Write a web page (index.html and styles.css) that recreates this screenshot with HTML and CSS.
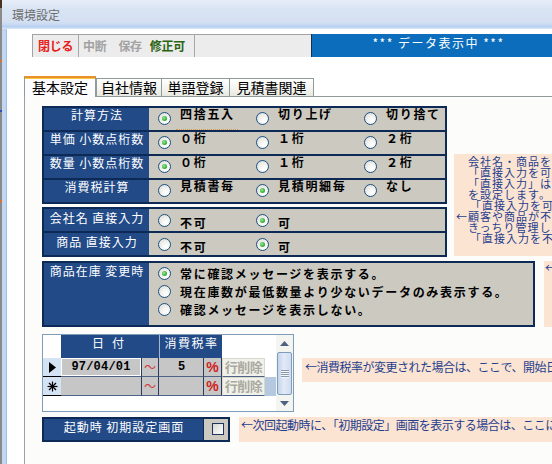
FILE: index.html
```html
<!DOCTYPE html>
<html lang="ja">
<head>
<meta charset="utf-8">
<title>環境設定</title>
<link rel="stylesheet" href="styles.css">
</head>
<body>
<div class="screen">
  <div class="desk-strip"></div>
  <div class="window">
    <header class="titlebar"><span class="title">環境設定</span></header>
    <div class="client">
      <div class="win-edge"></div>
      <main class="content">
        <div class="toolbar">
          <div class="tb-group tb-first"><span class="tb-btn red">閉じる</span></div>
          <div class="tb-group tb-second">
            <span class="tb-btn gray">中断</span>
            <span class="tb-btn gray sp12">保存</span>
            <span class="tb-btn green sp8">修正可</span>
          </div>
          <div class="tb-group tb-third"></div>
          <div class="banner">*** データ表示中 ***</div>
        </div>

        <nav class="tabs">
          <div class="tab active">基本設定</div>
          <div class="tab t2">自社情報</div>
          <div class="tab t3">単語登録</div>
          <div class="tab t4">見積書関連</div>
          <div class="tab-rest"></div>
        </nav>

        <section class="panel">
          <div class="sec-a">
            <div class="col-a">
              <div class="grp g1">
                <div class="grp-row">
                  <div class="lbl">計算方法</div>
                  <div class="opts">
                    <div class="opt o1"><span class="radio on"><span class="dot"></span></span><span class="opt-text">四捨五入</span><span class="focus-line"></span></div>
                    <div class="opt o2"><span class="radio"></span><span class="opt-text">切り上げ</span></div>
                    <div class="opt o3"><span class="radio"></span><span class="opt-text">切り捨て</span></div>
                  </div>
                </div>
                <div class="grp-row">
                  <div class="lbl">単価 小数点桁数</div>
                  <div class="opts">
                    <div class="opt o1"><span class="radio on"><span class="dot"></span></span><span class="opt-text">０桁</span></div>
                    <div class="opt o2"><span class="radio"></span><span class="opt-text">１桁</span></div>
                    <div class="opt o3"><span class="radio"></span><span class="opt-text">２桁</span></div>
                  </div>
                </div>
                <div class="grp-row">
                  <div class="lbl">数量 小数点桁数</div>
                  <div class="opts">
                    <div class="opt o1"><span class="radio on"><span class="dot"></span></span><span class="opt-text">０桁</span></div>
                    <div class="opt o2"><span class="radio"></span><span class="opt-text">１桁</span></div>
                    <div class="opt o3"><span class="radio"></span><span class="opt-text">２桁</span></div>
                  </div>
                </div>
                <div class="grp-row">
                  <div class="lbl">消費税計算</div>
                  <div class="opts">
                    <div class="opt o1"><span class="radio"></span><span class="opt-text">見積書毎</span></div>
                    <div class="opt o2"><span class="radio on"><span class="dot"></span></span><span class="opt-text">見積明細毎</span></div>
                    <div class="opt o3"><span class="radio"></span><span class="opt-text">なし</span></div>
                  </div>
                </div>
              </div>

              <div class="grp g2">
                <div class="grp-row">
                  <div class="lbl">会社名 直接入力</div>
                  <div class="opts">
                    <div class="opt o1"><span class="radio"></span><span class="opt-text">不可</span></div>
                    <div class="opt o2"><span class="radio on"><span class="dot"></span></span><span class="opt-text">可</span></div>
                  </div>
                </div>
                <div class="grp-row">
                  <div class="lbl">商品 直接入力</div>
                  <div class="opts">
                    <div class="opt o1"><span class="radio"></span><span class="opt-text">不可</span></div>
                    <div class="opt o2"><span class="radio on"><span class="dot"></span></span><span class="opt-text">可</span></div>
                  </div>
                </div>
              </div>
            </div>

            <div class="note note1">
              <div class="nl p14">会社名・商品を含めた</div>
              <div class="nl p14">「直接入力を可能」</div>
              <div class="nl p14">「直接入力」は不可</div>
              <div class="nl p14">を設定します。</div>
              <div class="nl p16">「直接入力を可能」</div>
              <div class="nl p2">←顧客や商品が不特定</div>
              <div class="nl p14">きっちり管理したい</div>
              <div class="nl p16">「直接入力を不可」</div>
            </div>
          </div>

          <div class="sec-b">
            <div class="grp g3">
              <div class="grp-row tall">
                <div class="lbl">商品在庫 変更時</div>
                <div class="opts stack">
                  <div class="line"><span class="radio on"><span class="dot"></span></span><span class="opt-text">常に確認メッセージを表示する。</span></div>
                  <div class="line"><span class="radio"></span><span class="opt-text">現在庫数が最低数量より少ないデータのみ表示する。</span></div>
                  <div class="line"><span class="radio"></span><span class="opt-text">確認メッセージを表示しない。</span></div>
                </div>
              </div>
            </div>
            <div class="note note2">←</div>
          </div>

          <div class="sec-c">
            <div class="dtable">
              <div class="dgrid">
                <div class="dh">
                  <div class="c-sel-h"></div>
                  <div class="h-date">日付</div>
                  <div class="h-gap"></div>
                  <div class="h-rate">消費税率</div>
                </div>
                <div class="dr">
                  <div class="c-sel"><svg width="7" height="11" viewBox="0 0 7 11"><polygon points="0,0 7,5.5 0,11" fill="#000"/></svg></div>
                  <div class="c-date focus">97/04/01</div>
                  <div class="c-tilde">〜</div>
                  <div class="c-gap"></div>
                  <div class="c-rate">5</div>
                  <div class="c-pct">%</div>
                  <div class="c-del">行削除</div>
                </div>
                <div class="dr">
                  <div class="c-sel"><svg width="11" height="11" viewBox="0 0 11 11"><g stroke="#000" stroke-width="1.2"><line x1="5.5" y1="0.5" x2="5.5" y2="10.5"/><line x1="0.5" y1="5.5" x2="10.5" y2="5.5"/><line x1="2" y1="2" x2="9" y2="9"/><line x1="9" y1="2" x2="2" y2="9"/></g></svg></div>
                  <div class="c-date"></div>
                  <div class="c-tilde">〜</div>
                  <div class="c-gap"></div>
                  <div class="c-rate"></div>
                  <div class="c-pct">%</div>
                  <div class="c-del">行削除</div>
                  <div class="c-blue"></div>
                </div>
              </div>
              <div class="vscroll">
                <div class="sb-btn"><svg width="9" height="5" viewBox="0 0 9 5"><polygon points="0,5 4.5,0 9,5" fill="#4d6185"/></svg></div>
                <div class="sb-thumb"><span class="grip"></span><span class="grip"></span><span class="grip"></span><span class="grip"></span></div>
                <div class="sb-track"></div>
                <div class="sb-btn"><svg width="9" height="5" viewBox="0 0 9 5"><polygon points="0,0 9,0 4.5,5" fill="#4d6185"/></svg></div>
              </div>
            </div>
            <div class="note note3">←消費税率が変更された場合は、ここで、開始日を</div>
          </div>

          <div class="sec-d">
            <div class="startup">
              <div class="lbl">起動時 初期設定画面</div>
              <div class="chk-cell"><span class="checkbox"></span></div>
            </div>
            <div class="note note4">←次回起動時に、「初期設定」画面を表示する場合は、ここにチェック</div>
          </div>
        </section>
      </main>
    </div>
  </div>
</div>
</body>
</html>
```

FILE: styles.css
```css
* { box-sizing: border-box; margin: 0; padding: 0; }
html, body { width: 552px; height: 464px; overflow: hidden; }
body {
  font-family: "Noto Sans CJK JP", "Noto Sans", sans-serif;
  font-size: 12px;
  background: #fff;
  color: #000;
}
.screen { display: flex; width: 552px; height: 464px; }
.desk-strip {
  width: 2px; flex-shrink: 0;
  background: linear-gradient(#4a3020 0 8px, #8a8a8a 8px 60px, #e07020 60px 62px, #8a8a8a 62px 110px, #3050c0 110px 112px, #8a8a8a 112px 200px, #e07020 200px 202px, #8a8a8a 202px);
}
.window { flex: 1; display: flex; flex-direction: column; min-width: 0; }
.titlebar {
  height: 29px; flex-shrink: 0;
  display: flex; align-items: center; padding-left: 10px;
  background: linear-gradient(#e6edf8 0, #d9e4f3 30%, #d4e0f2 75%, #c6d9f3 86%, #b6cff1 93%, #dfeafb 100%);
}
.title { color: #6d6d6d; font-size: 12px; line-height: 14px; }
.client { flex: 1; display: flex; min-height: 0; }
.win-edge { width: 5px; flex-shrink: 0; background: #c2d6f1; border-right: 1px solid #a2bfe6; }
.content { flex: 1; background: #fff; display: flex; flex-direction: column; overflow: hidden; min-width: 0; }

/* toolbar */
.toolbar { display: flex; margin: 5px 0 0 25px; height: 23px; flex-shrink: 0; }
.tb-group { height: 23px; background: #ececec; border-top: 1px solid #a3a3a3; display: flex; align-items: center; flex-shrink: 0; }
.tb-first { width: 47px; border-left: 1px solid #a3a3a3; border-right: 1px solid #a8a8a8; padding-left: 5px; }
.tb-second { width: 116px; border-right: 1px solid #a8a8a8; padding-left: 4px; }
.tb-third { width: 116px; }
.tb-btn { font-weight: bold; font-size: 12px; line-height: 14px; letter-spacing: -0.3px; }
.tb-btn.red { color: #e8201c; }
.tb-btn.gray { color: #a2a2a2; }
.tb-btn.green { color: #2a6410; }
.sp12 { margin-left: 12px; }
.sp8 { margin-left: 8px; }
.banner {
  width: 254px; flex-shrink: 0; height: 23px;
  background: #0b6dbb; border-left: 1px solid #1b2f4d;
  color: #fff; text-align: center; font-size: 12px; line-height: 14px; padding-top: 2px; letter-spacing: 1.5px;
}

/* tabs */
.tabs { display: flex; align-items: flex-end; margin: 19px 0 0 17px; height: 21px; flex-shrink: 0; }
.tab {
  height: 19px; border: 1px solid #919b9c; border-left: none;
  background: linear-gradient(#ffffff, #f3f3ef 60%, #e8e8e2);
  font-size: 14px; line-height: 17px; text-align: center; flex-shrink: 0; color: #000;
}
.tab.active {
  width: 72px; height: 21px; border: 1px solid #919b9c; border-bottom: none;
  border-top: 2px solid #e8912c; box-shadow: inset 0 1px 0 #ffc73c;
  background: #fcfcfe; line-height: 18px;
}
.tab.t2 { width: 66px; border-left: 1px solid #919b9c; }
.tab.t3 { width: 68px; }
.tab.t4 { width: 84px; }
.tab-rest { flex: 1; height: 1px; border-bottom: 1px solid #919b9c; }

/* panel */
.panel {
  flex: 1; margin-left: 17px; border-left: 1px solid #9aa0a4;
  background: #fcfcfa; padding: 9px 0 0 17px; min-width: 0;
}
.sec-a { display: flex; align-items: flex-start; }
.col-a { width: 405px; flex-shrink: 0; }

.grp { border: 2px solid #0d2a56; background: #ccc9c1; }
.g2 { margin-top: 3px; }
.grp-row { display: flex; height: 22px; }
.grp-row + .grp-row { height: 24px; border-top: 2px solid #0d2a56; }
.grp-row.tall { height: 62px; }
.lbl {
  width: 105px; flex-shrink: 0; background: #214a87; color: #fff;
  text-align: center; letter-spacing: 1px; line-height: 14px; font-size: 12px; padding-left: 1px;
}
.g2 .lbl { padding-top: 2px; }
.g3 .lbl { padding-top: 1px; }
.opts { flex: 1; display: flex; }
.opt { display: flex; align-items: flex-start; padding-left: 9px; position: relative; }
.opt.o1 { width: 98px; }
.opt.o2 { width: 108px; }
.opt.o3 { flex: 1; }
.radio {
  width: 13px; height: 13px; flex-shrink: 0; margin-top: 4px;
  border-radius: 50%; border: 1px solid #1c5180;
  background: radial-gradient(circle at 65% 70%, #ffffff 0, #f6f6f4 35%, #d6d6d0 100%);
  display: flex; align-items: center; justify-content: center;
}
.dot {
  width: 5px; height: 5px; border-radius: 50%;
  background: radial-gradient(circle at 40% 40%, #9be89b 0, #3cb43c 55%, #1d8a1d 100%);
}
.opt-text { margin-left: 9px; font-weight: bold; letter-spacing: 1.7px; line-height: 14px; margin-top: -1px; white-space: nowrap; }
.g2 .radio { margin-top: 5px; }
.g2 .opt-text { margin-top: 7px; }
.focus-line {
  position: absolute; left: 27px; width: 62px; bottom: 0;
  border-top: 1px dotted #d89a4a;
}

.stack { flex-direction: column; padding-top: 1px; }
.line { height: 18px; display: flex; align-items: center; padding-left: 9px; }
.line .radio { margin-top: 0; }
.line .opt-text { margin-top: 2px; }

/* notes */
.note {
  background: #fce4d2; color: #1f3e8e; font-size: 12px; letter-spacing: -0.5px;
  white-space: nowrap; overflow: hidden; flex-shrink: 0;
}
.note1 { margin: 48px 0 0 7px; width: 120px; height: 102px; padding-top: 2px; line-height: 11px; font-size: 11px; letter-spacing: 1px; }
.nl { height: 11px; }
.p14 { padding-left: 14px; }
.p16 { padding-left: 16px; }
.p2 { padding-left: 2px; }

.sec-b { display: flex; margin-top: 4px; }
.g3 { width: 493px; flex-shrink: 0; }
.note2 { margin-left: 9px; width: 30px; height: 66px; padding-left: 1px; line-height: 14px; }

/* data table */
.sec-c { display: flex; margin-top: 7px; align-items: flex-start; }
.dtable { width: 252px; height: 78px; border: 1px solid #7f9db9; background: #fff; display: flex; flex-shrink: 0; }
.dgrid { width: 233px; display: flex; flex-direction: column; }
.dh { display: flex; height: 23px; }
.c-sel-h { width: 18px; }
.h-date, .h-rate { background: #214a87; color: #fff; text-align: center; line-height: 14px; padding-top: 1px; }
.h-date { width: 98px; letter-spacing: 8px; padding-left: 4px; }
.h-gap { width: 1px; background: #a6b8d0; }
.h-rate { width: 62px; letter-spacing: 1.5px; padding-left: 1px; }
.dr { display: flex; height: 19px; }
.dr > div { border-bottom: 1px solid #4e6385; height: 19px; }
.c-sel { width: 18px; background: #d4e3f3; display: flex; align-items: center; justify-content: center; border-bottom-color: #000 !important; }
.c-date {
  width: 80px; background: #c6c6c6; text-align: center;
  font-family: "Liberation Mono", monospace; font-weight: bold; font-size: 12px; line-height: 18px; letter-spacing: 0.2px;
}
.c-date.focus { box-shadow: inset 0 0 0 1px #ffffff; }
.c-tilde { width: 18px; background: #c6c6c6; border-left: 1px solid #2c3c5c; border-right: 1px solid #2c3c5c; color: #d03a3a; text-align: center; line-height: 17px; font-size: 12px; }
.c-gap { width: 1px; background: #c6c6c6; }
.c-rate { width: 43px; background: #c6c6c6; text-align: center; font-family: "Liberation Mono", monospace; font-weight: bold; line-height: 18px; }
.c-pct { width: 19px; background: #c6c6c6; border-left: 1px solid #2c3c5c; border-right: 1px solid #2c3c5c; color: #d02020; font-weight: bold; text-align: center; line-height: 18px; font-family: "Liberation Sans", sans-serif; font-size: 14px; }
.c-del { width: 43px; background: #f1f1eb; border: 1px solid #d8d8ce; color: #a9a9a0; font-weight: bold; font-size: 13px; line-height: 16px; text-align: center; letter-spacing: -0.5px; }
.c-blue { width: 11px; background: #b4c8e0; border-bottom: none !important; }

.vscroll { width: 17px; background: #f4f4f0; display: flex; flex-direction: column; }
.sb-btn { height: 17px; display: flex; align-items: center; justify-content: center; flex-shrink: 0; }
.sb-btn:last-child { height: 16px; }
.sb-thumb {
  height: 43px; margin: 0 1px; border: 1px solid #7f9db9; border-radius: 2px; flex-shrink: 0;
  background: linear-gradient(90deg, #c4d4ee, #e2eaf7 45%, #d0dcf1 100%);
  display: flex; flex-direction: column; align-items: center; justify-content: center; gap: 1px;
}
.grip { width: 8px; height: 1px; background: #8c98ac; box-shadow: 0 1px 0 #f4f8fc; }
.sb-track { flex: 1; }

.note3 { margin: 24px 0 0 8px; width: 270px; height: 24px; padding: 2px 0 0 3px; line-height: 14px; }

/* startup */
.sec-d { display: flex; margin-top: 5px; }
.startup { width: 188px; height: 25px; border: 2px solid #0d2a56; display: flex; flex-shrink: 0; }
.startup .lbl { width: 159px; padding-top: 1px; }
.chk-cell { flex: 1; background: #ccc9c1; border-left: 1px solid #0d2a56; padding: 4px 0 0 8px; }
.checkbox {
  display: block; width: 12px; height: 12px; border: 1px solid #1c3560;
  background: linear-gradient(135deg, #d8d8d2, #ffffff);
}
.note4 { margin-left: 9px; width: 330px; height: 25px; padding: 1px 0 0 2px; line-height: 14px; }
```
